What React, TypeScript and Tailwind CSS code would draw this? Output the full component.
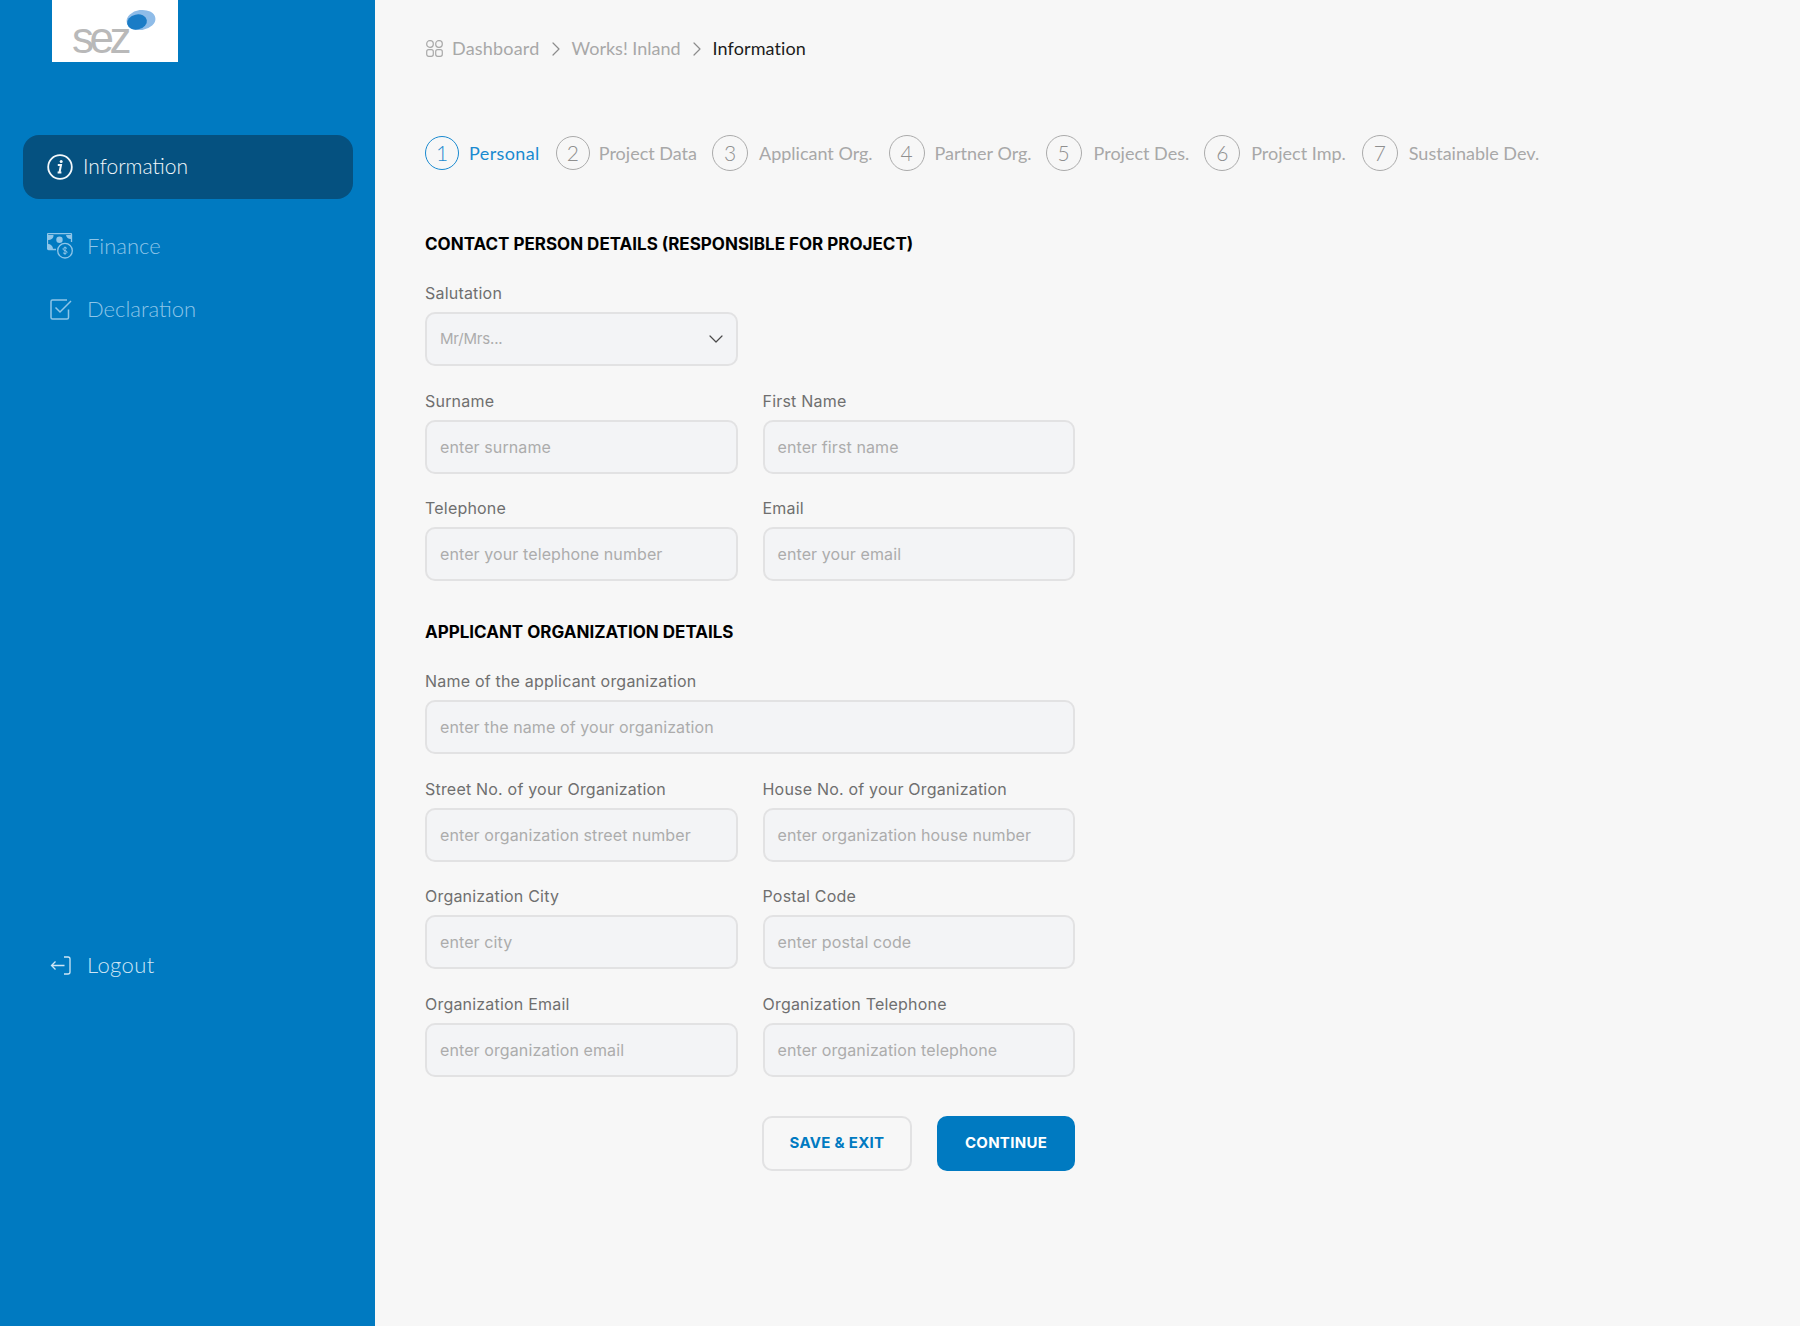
import { ChevronDown, ChevronRight } from 'lucide-react';

const raleway = 'font-["Lato","Noto_Sans",sans-serif]';
const mont = 'font-["Inter","Noto_Sans",sans-serif]';

const steps = [
  { n: 1, label: 'Personal', active: true, gap: 'mr-[16px]', circle: 'h-[34px] w-[34px]', text: 'ml-[10px] tracking-[0.4px]' },
  { n: 2, label: 'Project Data', active: false, gap: 'mr-[15px]', circle: 'h-[34px] w-[34px]', text: 'ml-[9px]' },
  { n: 3, label: 'Applicant Org.', active: false, gap: 'mr-[16px]', circle: 'h-[36px] w-[36px]', text: 'ml-[11px]' },
  { n: 4, label: 'Partner Org.', active: false, gap: 'mr-[14px]', circle: 'h-[36px] w-[36px]', text: 'ml-[10px]' },
  { n: 5, label: 'Project Des.', active: false, gap: 'mr-[15px]', circle: 'h-[36px] w-[36px]', text: 'ml-[12px]' },
  { n: 6, label: 'Project Imp.', active: false, gap: 'mr-[16px]', circle: 'h-[36px] w-[36px]', text: 'ml-[11px]' },
  { n: 7, label: 'Sustainable Dev.', active: false, gap: 'mr-0', circle: 'h-[36px] w-[36px]', text: 'ml-[11px]' },
];

function InfoIcon() {
  return (
    <svg width="26" height="26" viewBox="0 0 26 26" fill="none" stroke="currentColor" aria-hidden>
      <circle cx="13" cy="13" r="11.800" strokeWidth="1.800" />
      <path d="M10.800 11h3.200l-1.500 7.500M10.600 18.600h3.800" strokeWidth="2" />
      <circle cx="14.200" cy="7.400" r="1.500" fill="currentColor" stroke="none" />
    </svg>
  );
}

function FinanceIcon() {
  return (
    <svg width="26" height="26" viewBox="0 0 26 26" fill="none" stroke="currentColor" aria-hidden>
      <path d="M9 16.500H1.500a1 1 0 0 1-1-1V1.500a1 1 0 0 1 1-1h22a1 1 0 0 1 1 1V9" strokeWidth="1.300" />
      <path d="M1 2h5.500A4.500 4.500 0 0 1 2 7H1zM19 2h5v4a5 5 0 0 1-5-4zM1 11a5 5 0 0 1 5 5H1z" fill="currentColor" stroke="none" />
      <circle cx="12.500" cy="6.800" r="3.200" fill="currentColor" stroke="none" />
      <circle cx="18" cy="17.700" r="7.300" fill="#007ac1" strokeWidth="1.300" />
      <path d="M20 15.600c-.5-.7-1.200-1-2-1-1.100 0-2 .6-2 1.500 0 2 4 1 4 3 0 .9-.9 1.500-2 1.500-.8 0-1.600-.4-2-1M18 13.600v8.200" strokeWidth="1" />
    </svg>
  );
}

function DeclarationIcon() {
  return (
    <svg width="22" height="21" viewBox="0 0 22 21" fill="none" stroke="currentColor" aria-hidden>
      <path d="M18.500 10.500V18.500a1.500 1.500 0 0 1-1.500 1.500H2.500A1.500 1.500 0 0 1 1 18.500V2.500A1.500 1.500 0 0 1 2.500 1H17" strokeWidth="1.500" />
      <path d="M5.500 8.500 10 13 21 2" strokeWidth="1.500" />
    </svg>
  );
}

function LogoutIcon() {
  return (
    <svg width="21" height="19" viewBox="0 0 21 19" fill="none" stroke="currentColor" aria-hidden>
      <path d="M14 1h4a2 2 0 0 1 2 2v13a2 2 0 0 1-2 2h-4" strokeWidth="1.300" />
      <path d="M14.500 9.500H1.500M5.500 5.500l-4 4 4 4" strokeWidth="1.300" />
    </svg>
  );
}

function GridIcon() {
  return (
    <svg width="17" height="17" viewBox="0 0 17 17" fill="none" stroke="#a9a9a9" strokeWidth="1.200" aria-hidden>
      <rect x="0.700" y="0.700" width="6.600" height="6.600" rx="3" />
      <rect x="9.700" y="0.700" width="6.600" height="6.600" rx="3" />
      <rect x="0.700" y="9.700" width="6.600" height="6.600" rx="2" />
      <rect x="9.700" y="9.700" width="6.600" height="6.600" rx="2" />
    </svg>
  );
}

function Logo() {
  return (
    <div className="relative ml-[52px] h-[62px] w-[126px] bg-white">
      <span className='absolute left-[20px] top-[16px] font-["Liberation_Sans",sans-serif] text-[44px] leading-[44px] tracking-[-4.500px] text-[#b9b9b9]'>
        sez
      </span>
      <svg className="absolute left-[73px] top-[7px]" width="32" height="26" viewBox="0 0 32 26" aria-hidden>
        <ellipse cx="16" cy="13" rx="14.500" ry="10" fill="#8fbce8" transform="rotate(-8 16 13)" />
        <ellipse cx="12" cy="15" rx="10" ry="7.500" fill="#1a7cc6" transform="rotate(-12 12 15)" />
      </svg>
    </div>
  );
}

function Sidebar() {
  return (
    <aside className={`flex w-[375px] shrink-0 flex-col bg-[#007ac1] ${raleway}`}>
      <Logo />
      <nav className="mt-[73px] flex flex-col pl-[23px]">
        <a className="flex h-[64px] w-[330px] items-center gap-[10px] rounded-[16px] bg-[#055180] pl-[24px] text-[21px] font-light text-[#f3f8fb]">
          <InfoIcon />
          <span className="pb-[2px]">Information</span>
        </a>
        <a className="mt-[34px] flex h-[26px] items-center gap-[14px] pl-[24px] text-[22px] font-light text-[#8ec5e8]">
          <FinanceIcon />
          <span className="pb-[2px]">Finance</span>
        </a>
        <a className="mt-[37px] flex h-[26px] items-center gap-[15px] pl-[27px] text-[22px] font-light text-[#8ec5e8]">
          <DeclarationIcon />
          <span className="pb-[2px]">Declaration</span>
        </a>
        <a className="mt-[630px] flex h-[26px] items-center gap-[16px] pl-[27px] text-[22px] font-light text-[#cfe6f5]">
          <LogoutIcon />
          <span className="pb-[2px] tracking-[0.4px]">Logout</span>
        </a>
      </nav>
    </aside>
  );
}

function Breadcrumb() {
  return (
    <div className={`flex h-[24px] items-center pb-[1px] text-[18px] text-[#a8a8a8] ${raleway}`}>
      <span className="ml-[1px]">
        <GridIcon />
      </span>
      <span className="ml-[9px] tracking-[0.2px]">Dashboard</span>
      <ChevronRight className="mx-[4px] h-[24px] w-[24px] text-[#8c8c8c]" strokeWidth={1.200} />
      <span>Works! Inland</span>
      <ChevronRight className="mx-[4px] h-[24px] w-[24px] text-[#8c8c8c]" strokeWidth={1.200} />
      <span className="tracking-[0.1px] text-[#1c1c1c]">Information</span>
    </div>
  );
}

function Stepper() {
  return (
    <div className={`mt-[74px] flex h-[36px] items-center text-[18px] text-[#a8a8a8] ${raleway}`}>
      {steps.map((s) => (
        <div key={s.n} className={`flex items-center ${s.gap}`}>
          <span
            className={`flex items-center justify-center rounded-full border-[1.500px] text-[21px] font-light ${s.circle} ${
              s.active ? 'border-[#1a8ad0] text-[#1a8ad0]' : 'border-[#ababab] text-[#8f8f8f]'
            }`}
          >
            {s.n}
          </span>
          <span className={`${s.text} ${s.active ? 'text-[#1a8ad0]' : ''}`}>{s.label}</span>
        </div>
      ))}
    </div>
  );
}

function Field({ label, placeholder, className = '' }: { label: string; placeholder: string; className?: string }) {
  return (
    <div className={className}>
      <p className="text-[16px] leading-[20px] tracking-[0.2px] text-[#6f6f6f]">{label}</p>
      <div className="mt-[9px] flex h-[54px] items-center rounded-[10px] border-2 border-[#e2e2e3] bg-[#f3f4f6] pl-[13px] pr-[16px] text-[16px] tracking-[0.1px] text-[#acacac]">
        {placeholder}
      </div>
    </div>
  );
}

function Heading({ children }: { children: string }) {
  return <h2 className="text-[17px] font-bold leading-[20px] text-black">{children}</h2>;
}

export default function App() {
  return (
    <div className="flex min-h-[1326px] bg-[#f7f7f7]">
      <Sidebar />
      <main className="flex-1 pl-[50px] pt-[37px]">
        <Breadcrumb />
        <Stepper />
        <div className={`mt-[63px] w-[650px] ${mont}`}>
          <Heading>CONTACT PERSON DETAILS (RESPONSIBLE FOR PROJECT)</Heading>
          <div className="mt-[29px] grid grid-cols-2 gap-x-[25px] gap-y-[24.500px]">
            <div className="col-span-1">
              <p className="text-[16px] leading-[20px] tracking-[0.2px] text-[#6f6f6f]">Salutation</p>
              <div className="mt-[9px] flex h-[54px] items-center justify-between rounded-[10px] border-2 border-[#e2e2e3] bg-[#f3f4f6] pl-[13px] pr-[8px] text-[15px] tracking-[-0.2px] text-[#acacac]">
                Mr/Mrs...
                <ChevronDown className="h-[24px] w-[24px] text-[#4a4a4a]" strokeWidth={1.200} />
              </div>
            </div>
            <div />
            <Field label="Surname" placeholder="enter surname" />
            <Field label="First Name" placeholder="enter first name" />
            <Field label="Telephone" placeholder="enter your telephone number" />
            <Field label="Email" placeholder="enter your email" />
          </div>
          <div className="mt-[41px]">
            <Heading>APPLICANT ORGANIZATION DETAILS</Heading>
          </div>
          <div className="mt-[29px] grid grid-cols-2 gap-x-[25px] gap-y-[24.500px]">
            <Field className="col-span-2" label="Name of the applicant organization" placeholder="enter the name of your organization" />
            <Field label="Street No. of your Organization" placeholder="enter organization street number" />
            <Field label="House No. of your Organization" placeholder="enter organization house number" />
            <Field label="Organization City" placeholder="enter city" />
            <Field label="Postal Code" placeholder="enter postal code" />
            <Field label="Organization Email" placeholder="enter organization email" />
            <Field label="Organization Telephone" placeholder="enter organization telephone" />
          </div>
          <div className="mt-[39px] flex justify-end gap-[25px]">
            <button type="button" className="h-[55px] w-[150px] rounded-[10px] border-2 border-[#e2e2e3] text-[15px] font-bold tracking-[0.3px] text-[#007ac1]">
              SAVE &amp; EXIT
            </button>
            <button type="button" className="h-[55px] w-[138px] rounded-[10px] bg-[#007ac1] text-[15px] font-bold tracking-[0.3px] text-white">
              CONTINUE
            </button>
          </div>
        </div>
      </main>
    </div>
  );
}
